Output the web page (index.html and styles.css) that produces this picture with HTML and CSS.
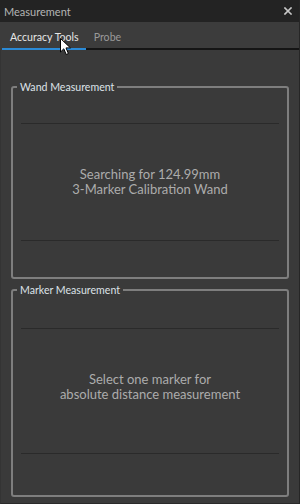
FILE: index.html
```html
<!DOCTYPE html>
<html lang="en">
<head>
  <meta charset="UTF-8" />
  <title>Measurement</title>
  <link rel="stylesheet" href="styles.css">
</head>
<body>
  <div class="window">
    <div class="titlebar">
      <span class="title">Measurement</span>
      <svg class="close" width="8" height="8" viewBox="0 0 8 8">
        <path d="M1 1L7 7M7 1L1 7" stroke="#c8c8c8" stroke-width="1.6" stroke-linecap="square"/>
      </svg>
    </div>
    <div class="tabs">
      <div class="tab active">Accuracy Tools</div>
      <div class="tab">Probe</div>
      <div class="tab-rest"></div>
    </div>
    <div class="pane">
      <div class="group wand">
        <span class="group-title">Wand Measurement</span>
        <div class="rule"></div>
        <div class="message">Searching for 124.99mm<br>3-Marker Calibration Wand</div>
        <div class="rule"></div>
      </div>
      <div class="group marker">
        <span class="group-title">Marker Measurement</span>
        <div class="rule"></div>
        <div class="message">Select one marker for<br>absolute distance measurement</div>
        <div class="rule"></div>
      </div>
    </div>
    <svg class="cursor" width="12" height="18" viewBox="0 0 12 18">
      <path d="M0.5 0.5L0.5 14L3.8 10.8L6.2 16.5L8.4 15.5L6 9.9L10.5 9.9Z" fill="#fff" stroke="#000" stroke-width="1"/>
    </svg>
  </div>
</body>
</html>
```
FILE: styles.css
```css
* { margin: 0; padding: 0; box-sizing: border-box; }
body {
  background: #2e2e2e;
  font-family: Lato, 'Open Sans', sans-serif;
}
.window {
  position: relative;
  width: 300px;
  height: 504px;
  display: flex;
  flex-direction: column;
  border-right: 1px solid #262626;
}
.titlebar {
  height: 22px;
  background: #232323;
  display: flex;
  align-items: center;
  justify-content: space-between;
  padding: 0 7px 0 4px;
}
.title { color: #b4b4b4; font-size: 11px; }
.close { display: block; }
.tabs {
  height: 28px;
  background: #3c3c3c;
  display: flex;
  align-items: stretch;
  padding-left: 2px;
}
.tab {
  display: flex;
  align-items: center;
  padding: 4px 7px 0 8px;
  font-size: 10.6px;
  color: #9a9a9a;
  border-bottom: 2px solid #151515;
}
.tab.active { color: #e6e6e6; border-bottom-color: #2b8ad6; }
.tab-rest { flex: 1; border-bottom: 2px solid #151515; }
.pane {
  flex: 1;
  background: #3a3a3a;
  padding: 36px 10px 6px 10px;
  display: flex;
  flex-direction: column;
  gap: 10px;
  border-left: 1px solid #343434;
  border-bottom: 1px solid #2a2a2a;
}
.group {
  border: 2px solid #7e7e7e;
  border-radius: 3px;
  display: flex;
  flex-direction: column;
  padding: 0 8px;
}
.wand { height: 193px; padding-bottom: 36px; }
.wand .rule:first-of-type { margin-top: 28px; }
.marker { flex: 1; padding-bottom: 41px; }
.marker .rule:first-of-type { margin-top: 30px; }
.group-title {
  align-self: flex-start;
  margin: -9px 0 0 -4px;
  padding: 0 3px;
  height: 16px;
  line-height: 16px;
  background: #3a3a3a;
  color: #dde2e8;
  font-size: 10.6px;
}
.rule { height: 1px; background: #2a2a2a; }
.message {
  flex: 1;
  display: flex;
  align-items: center;
  justify-content: center;
  text-align: center;
  color: #acacac;
  font-size: 13px;
  line-height: 15px;
}
.marker .message { padding-bottom: 8px; }
.cursor { position: absolute; left: 60px; top: 38px; }
```
